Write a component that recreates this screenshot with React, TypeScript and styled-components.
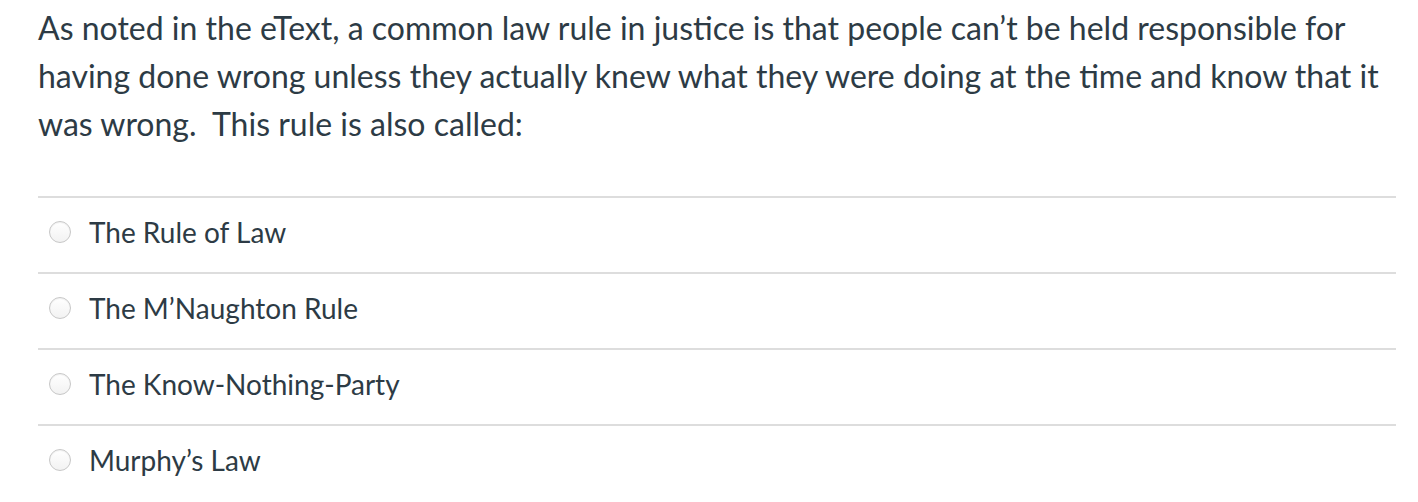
import styled, { createGlobalStyle } from "styled-components";

const GlobalStyle = createGlobalStyle`
  html, body { margin: 0; padding: 0; background: #ffffff; }
  body { font-family: Lato, "Open Sans", sans-serif; color: #2d3b45; }
`;

const answers = [
  "The Rule of Law",
  "The M\u2019Naughton Rule",
  "The Know-Nothing-Party",
  "Murphy\u2019s Law",
];

export default function App() {
  return (
    <>
      <GlobalStyle />
      <Question>
        <QuestionText>
          As noted in the eText, a common law rule in justice is that people can’t be held responsible for
          <br />
          having done wrong unless they actually knew what they were doing at the time and know that it
          <br />
          was wrong.&nbsp; This rule is also called:
        </QuestionText>
        <AnswerList>
          {answers.map((a) => (
            <Answer key={a}>
              <Radio type="radio" name="q1" />
              <AnswerLabel>{a}</AnswerLabel>
            </Answer>
          ))}
        </AnswerList>
      </Question>
    </>
  );
}

const Question = styled.div`
  padding: 4px 22px 0 38px;
`;

const QuestionText = styled.p`
  margin: 0 0 48px;
  font-size: 32px;
  line-height: 48px;
  white-space: nowrap;
`;

const AnswerList = styled.div`
  display: flex;
  flex-direction: column;
`;

const Answer = styled.label`
  display: flex;
  align-items: center;
  gap: 18px;
  padding: 16px 0 22px 11px;
  border-top: 2px solid #dddddd;
`;

const Radio = styled.input`
  appearance: none;
  margin: 0;
  width: 22px;
  height: 22px;
  border-radius: 50%;
  border: 1px solid #c7c7c7;
  background: linear-gradient(#ffffff, #f2f2f2);
  box-shadow: inset 0 1px 1px rgba(0, 0, 0, 0.06);
  flex-shrink: 0;
`;

const AnswerLabel = styled.span`
  font-size: 28px;
  line-height: 36px;
`;
